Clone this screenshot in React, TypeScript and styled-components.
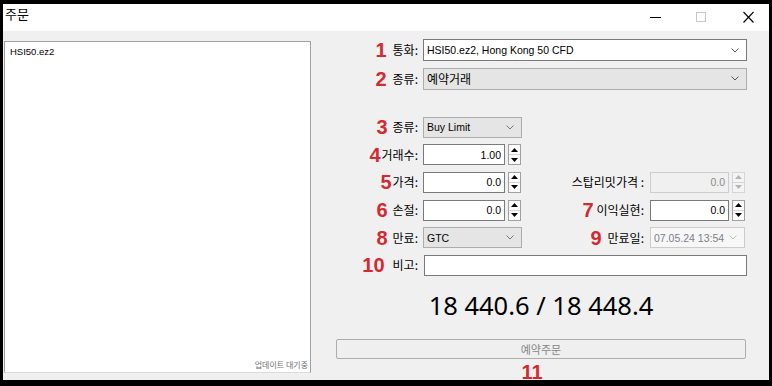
import React from "react";
import styled, { createGlobalStyle } from "styled-components";

const Global = createGlobalStyle`
  html, body { margin: 0; padding: 0; background: #000; }
  body { font-family: "Liberation Sans", "Noto Sans CJK KR", sans-serif; }
`;

const Screen = styled.div`
  width: 772px;
  height: 386px;
  box-sizing: border-box;
  background: #000;
  padding: 4px 3px 6px 3px;
  display: flex;
`;

const Window = styled.div`
  flex: 1;
  display: flex;
  flex-direction: column;
  background: #f0f0f0;
  overflow: hidden;
`;

const TitleBar = styled.div`
  height: 27px;
  flex: none;
  background: #fff;
  display: flex;
  align-items: flex-start;
  box-sizing: border-box;
  padding: 2px 15px 0 2px;
`;

const Title = styled.span`
  font: 13px/16px "Noto Sans CJK KR", sans-serif;
  color: #000;
`;

const Controls = styled.div`
  margin-left: auto;
  display: flex;
  align-items: flex-start;
  padding-top: 4px;
`;

const CtrlIcon = styled.svg<{ $ml: number }>`
  display: block;
  margin-left: ${(p) => p.$ml}px;
`;

const Body = styled.div`
  flex: 1;
  min-height: 0;
  display: flex;
  overflow: hidden;
`;

const LeftPanel = styled.div`
  width: 307px;
  flex: none;
  box-sizing: border-box;
  margin: 10px 0 7px 1px;
  background: #fff;
  border: 1px solid #a0a0a0;
  border-bottom-color: #dadada;
  display: flex;
  flex-direction: column;
  justify-content: space-between;
  padding: 4px 2px 2px 5px;
`;

const SymbolItem = styled.div`
  font: 9.5px/11px "Liberation Sans", sans-serif;
  color: #000;
`;

const Status = styled.div`
  align-self: flex-end;
  font: 8px/10px "Noto Sans CJK KR", sans-serif;
  color: #707070;
`;

const RightPanel = styled.div`
  flex: 1;
  display: flex;
  flex-direction: column;
  padding-top: 8px;
`;

const Form = styled.div`
  display: grid;
  grid-template-columns: 108px 99px 120px 97px;
  grid-template-rows: 22px 22px 14px repeat(6, 21px);
  column-gap: 4px;
  row-gap: 6.6px;
`;

const LabelCell = styled.div<{ $gap?: number; $col?: number }>`
  grid-column: ${(p) => p.$col ?? 1};
  display: flex;
  justify-content: flex-end;
  align-items: center;
  gap: ${(p) => p.$gap ?? 5}px;
  padding-right: ${(p) => (p.$col === 3 ? 2 : 1)}px;
  white-space: nowrap;
`;

const Num = styled.span`
  font: bold 20px/20px "Liberation Sans", sans-serif;
  color: #d12a32;
`;

const Label = styled.span`
  font: 12px/14px "Noto Sans CJK KR", sans-serif;
  color: #000;
`;

const Spacer = styled.div`
  grid-column: 1 / 5;
`;

type Variant = "edit" | "list" | "disabled";

const Combo = styled.div<{ $variant: Variant; $span?: string; $w?: number }>`
  grid-column: ${(p) => p.$span ?? "auto"};
  ${(p) => (p.$w ? `width: ${p.$w}px;` : "")}
  display: flex;
  align-items: center;
  justify-content: space-between;
  box-sizing: border-box;
  height: 100%;
  padding: 0 7px 0 3px;
  background: ${(p) => (p.$variant === "list" ? "#e5e5e5" : p.$variant === "disabled" ? "#f7f7f7" : "#fff")};
  border: 1px solid ${(p) => (p.$variant === "edit" ? "#7a7a7a" : p.$variant === "list" ? "#adadad" : "#cccccc")};
  font: 10.5px/12px "Liberation Sans", "Noto Sans CJK KR", sans-serif;
  color: ${(p) => (p.$variant === "disabled" ? "#7a7f88" : "#000")};
  white-space: nowrap;
`;

const ComboText = styled.span<{ $kr?: boolean }>`
  font-family: ${(p) => (p.$kr ? '"Noto Sans CJK KR", sans-serif' : '"Liberation Sans", sans-serif')};
  font-size: ${(p) => (p.$kr ? 12 : 10.5)}px;
`;

const Spinner = styled.div<{ $col: number; $w: number }>`
  grid-column: ${(p) => p.$col};
  width: ${(p) => p.$w}px;
  display: flex;
  gap: 3px;
  height: 100%;
`;

const NumInput = styled.div<{ $disabled?: boolean }>`
  flex: 1;
  box-sizing: border-box;
  height: 100%;
  display: flex;
  align-items: center;
  justify-content: flex-end;
  padding-right: 3px;
  background: ${(p) => (p.$disabled ? "#f0f0f0" : "#fff")};
  border: 1px solid ${(p) => (p.$disabled ? "#cccccc" : "#7a7a7a")};
  font: 10.5px/12px "Liberation Sans", sans-serif;
  color: ${(p) => (p.$disabled ? "#8a8a8a" : "#000")};
`;

const SpinBox = styled.div<{ $disabled?: boolean }>`
  width: 13px;
  box-sizing: border-box;
  display: flex;
  flex-direction: column;
  border: 1px solid ${(p) => (p.$disabled ? "#d5d5d5" : "#a0a0a0")};
  background: ${(p) => (p.$disabled ? "#f4f4f4" : "#fdfdfd")};
`;

const SpinHalf = styled.div<{ $disabled?: boolean }>`
  flex: 1;
  display: flex;
  align-items: center;
  justify-content: center;
  & + & {
    border-top: 1px solid ${(p) => (p.$disabled ? "#d5d5d5" : "#a0a0a0")};
  }
`;

const TextInput = styled.div`
  grid-column: 2 / 5;
  box-sizing: border-box;
  height: 100%;
  background: #fff;
  border: 1px solid #7a7a7a;
  margin-left: 1px;
`;

const Bottom = styled.div`
  display: flex;
  flex-direction: column;
  padding: 0 23px 0 25px;
`;

const Price = styled.div`
  margin-top: 14.5px;
  text-align: center;
  font: 25.5px/30px "Noto Sans", "Liberation Sans", sans-serif;
  color: #000;
`;

const OrderButton = styled.div`
  margin-top: 18.5px;
  height: 20px;
  box-sizing: border-box;
  border: 1px solid #adadad;
  border-radius: 2px;
  background: #efefef;
  display: flex;
  align-items: center;
  justify-content: center;
  font: 11px/14px "Noto Sans CJK KR", sans-serif;
  color: #858585;
`;

const Eleven = styled.div`
  margin-top: 3.4px;
  padding-right: 18px;
  text-align: center;
  font: bold 20px/20px "Liberation Sans", sans-serif;
  color: #d12a32;
`;

const Chevron = ({ color = "#555" }: { color?: string }) => (
  <svg width="8" height="5" viewBox="0 0 8 5">
    <polyline points="0.5,0.5 4,4 7.5,0.5" fill="none" stroke={color} strokeWidth="1" />
  </svg>
);

const Arrow = ({ up, color }: { up?: boolean; color: string }) => (
  <svg width="7" height="4" viewBox="0 0 7 4">
    {up ? <polygon points="0,4 7,4 3.5,0" fill={color} /> : <polygon points="0,0 7,0 3.5,4" fill={color} />}
  </svg>
);

const SpinField = ({ value, col, w, disabled }: { value: string; col: number; w: number; disabled?: boolean }) => (
  <Spinner $col={col} $w={w}>
    <NumInput $disabled={disabled}>{value}</NumInput>
    <SpinBox $disabled={disabled}>
      <SpinHalf $disabled={disabled}>
        <Arrow up color={disabled ? "#b5b5b5" : "#000"} />
      </SpinHalf>
      <SpinHalf $disabled={disabled}>
        <Arrow color={disabled ? "#b5b5b5" : "#000"} />
      </SpinHalf>
    </SpinBox>
  </Spinner>
);

const Row = ({ n, label, gap }: { n?: string; label: string; gap?: number }) => (
  <LabelCell $gap={gap}>
    {n && <Num>{n}</Num>}
    <Label>{label}</Label>
  </LabelCell>
);

export default function App() {
  return (
    <>
      <Global />
      <Screen>
        <Window>
          <TitleBar>
            <Title>주문</Title>
            <Controls>
              <CtrlIcon $ml={0} width="11" height="12" viewBox="0 0 11 12">
                <line x1="0" y1="7.5" x2="11" y2="7.5" stroke="#000" strokeWidth="1" />
              </CtrlIcon>
              <CtrlIcon $ml={35} width="10" height="12" viewBox="0 0 10 12">
                <rect x="0.5" y="2.5" width="9" height="9" fill="none" stroke="#c8c8c8" strokeWidth="1" />
              </CtrlIcon>
              <CtrlIcon $ml={37} width="11" height="13" viewBox="0 0 11 13">
                <line x1="0.5" y1="2" x2="10.5" y2="12.5" stroke="#000" strokeWidth="1.1" />
                <line x1="10.5" y1="2" x2="0.5" y2="12.5" stroke="#000" strokeWidth="1.1" />
              </CtrlIcon>
            </Controls>
          </TitleBar>
          <Body>
            <LeftPanel>
              <SymbolItem>HSI50.ez2</SymbolItem>
              <Status>업데이트 대기중</Status>
            </LeftPanel>
            <RightPanel>
              <Form>
                <Row n="1" label="통화:" gap={6} />
                <Combo $variant="edit" $span="2 / 5">
                  <ComboText>HSI50.ez2, Hong Kong 50 CFD</ComboText>
                  <Chevron />
                </Combo>

                <Row n="2" label="종류:" gap={6} />
                <Combo $variant="list" $span="2 / 5">
                  <ComboText $kr>예약거래</ComboText>
                  <Chevron />
                </Combo>

                <Spacer />

                <Row n="3" label="종류:" gap={5} />
                <Combo $variant="list" $span="2">
                  <ComboText>Buy Limit</ComboText>
                  <Chevron color="#777" />
                </Combo>

                <Row n="4" label="거래수:" gap={1} />
                <SpinField value="1.00" col={2} w={98} />

                <Row n="5" label="가격:" gap={1} />
                <SpinField value="0.0" col={2} w={98} />
                <LabelCell $col={3}>
                  <Label>스탑리밋가격 :</Label>
                </LabelCell>
                <SpinField value="0.0" col={4} w={95} disabled />

                <Row n="6" label="손절:" gap={5} />
                <SpinField value="0.0" col={2} w={98} />
                <LabelCell $col={3} $gap={3}>
                  <Num>7</Num>
                  <Label>이익실현:</Label>
                </LabelCell>
                <SpinField value="0.0" col={4} w={95} />

                <Row n="8" label="만료:" gap={5} />
                <Combo $variant="list" $span="2">
                  <ComboText>GTC</ComboText>
                  <Chevron color="#777" />
                </Combo>
                <LabelCell $col={3} $gap={6}>
                  <Num>9</Num>
                  <Label>만료일:</Label>
                </LabelCell>
                <Combo $variant="disabled" $span="4" $w={95}>
                  <ComboText>07.05.24 13:54</ComboText>
                  <Chevron color="#c0c0c0" />
                </Combo>

                <Row n="10" label="비고:" gap={8} />
                <TextInput />
              </Form>
              <Bottom>
                <Price>18 440.6 / 18 448.4</Price>
                <OrderButton>예약주문</OrderButton>
                <Eleven>11</Eleven>
              </Bottom>
            </RightPanel>
          </Body>
        </Window>
      </Screen>
    </>
  );
}
